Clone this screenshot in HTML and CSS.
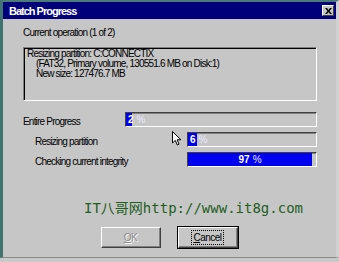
FILE: index.html
```html
<!DOCTYPE html>
<html lang="en">
<head>
  <meta charset="UTF-8">
  <title>Batch Progress</title>
  <link rel="stylesheet" href="styles.css">
</head>
<body>
  <div class="window">
    <div class="titlebar">
      <span class="title">Batch Progress</span>
      <span class="close">
        <svg width="7" height="6" viewBox="0 0 7 6"><path d="M0 0h2l1.5 2 1.5-2h2L4.5 3 7 6H5L3.5 4 2 6H0l2.5-3z" fill="#000"/></svg>
      </span>
    </div>
    <div class="content">
      <div class="caption">Current operation (1 of 2)</div>
      <div class="opbox">
        <div>Resizing partition: C:CONNECTIX</div>
        <div class="indent">(FAT32, Primary volume, 130551.6 MB on Disk:1)</div>
        <div class="indent">New size: 127476.7 MB</div>
      </div>

      <div class="progress">
        <div class="row">
          <span class="label">Entire Progress</span>
          <div class="bar wide"><div class="fill" style="width: 3%">2 <i>%</i></div></div>
        </div>
        <div class="row sub">
          <span class="label">Resizing partition</span>
          <div class="bar"><div class="fill" style="width: 7%">6 <i>%</i></div></div>
        </div>
        <div class="row sub">
          <span class="label">Checking current integrity</span>
          <div class="bar"><div class="fill center" style="width: 97%">97 <i>%</i></div></div>
        </div>
        <svg class="cursor" width="10" height="15" viewBox="0 0 10 15">
          <path d="M0.5 0.5v11.5l2.8-2.6 2 4.6 1.8-0.8-2-4.4h3.8z" fill="#fff" stroke="#000" stroke-width="1"/>
        </svg>
      </div>

      <div class="watermark">IT八哥网http://www.it8g.com</div>

      <div class="buttons">
        <button class="btn" disabled><u>O</u>K</button>
        <button class="btn default"><span class="focus"><u>C</u>ancel</span></button>
      </div>
    </div>
  </div>
</body>
</html>
```

FILE: styles.css
```css
* {
  box-sizing: border-box;
}

body {
  margin: 0;
  background: #c8c8c8;
  font-family: 'Liberation Sans', Arial, sans-serif;
  font-size: 10px;
  letter-spacing: -0.8px;
  color: #000;
}

.window {
  width: 339px;
  height: 258px;
  background: #c6c6c6;
  border-left: 3px solid #3f7470;
  border-top: 2px solid #4c7c78;
  border-right: 3px solid #d0d0d0;
  border-bottom: 1px solid #8a8a8a;
  display: flex;
  flex-direction: column;
}

.titlebar {
  height: 17px;
  background: #00007b;
  display: flex;
  align-items: center;
  justify-content: space-between;
  padding: 0 2px 0 6px;
}

.title {
  color: #fff;
  font-weight: bold;
  font-size: 11px;
  letter-spacing: -1px;
}

.close {
  width: 12px;
  height: 11px;
  background: #c6c6c6;
  border: 1px solid;
  border-color: #fff #404040 #404040 #fff;
  display: flex;
  align-items: center;
  justify-content: center;
}

.content {
  flex: 1;
  padding: 8px 19px 0 20px;
}

.caption {
  line-height: 12px;
  margin-bottom: 8px;
}

.opbox {
  height: 54px;
  border: 1px solid;
  border-color: #808080 #fff #fff #808080;
  box-shadow: inset 1px 1px 0 #000;
  padding: 1px 0 0 3px;
  line-height: 10px;
}

.opbox .indent {
  padding-left: 9px;
}

.progress {
  position: relative;
  margin-top: 11px;
  display: flex;
  flex-direction: column;
  gap: 5px;
}

.row {
  display: flex;
  align-items: center;
  height: 15px;
}

.row.sub {
  padding-left: 12px;
}

.label {
  flex: 1;
  padding-top: 3px;
}

.bar {
  width: 130px;
  height: 15px;
  border: 1px solid;
  border-color: #404040 #fff #fff #404040;
  box-shadow: inset 1px 1px 0 #808080;
  background: #c6c6c6;
  display: flex;
}

.bar.wide {
  width: 192px;
}

.fill {
  height: 100%;
  background: #0000f0;
  color: #fff;
  font-weight: bold;
  white-space: nowrap;
  display: flex;
  align-items: center;
  padding-left: 2px;
  letter-spacing: 0;
}

.fill.center {
  justify-content: center;
  padding-left: 0;
}

.fill i {
  font-style: normal;
  font-weight: normal;
  margin-left: 3px;
  color: #e8e8ff;
}

.cursor {
  position: absolute;
  left: 149px;
  top: 19px;
}

.watermark {
  margin-top: 33px;
  padding-left: 61px;
  font-family: 'DejaVu Sans Mono', 'Noto Sans CJK SC', monospace;
  font-size: 14px;
  line-height: 16px;
  letter-spacing: 0;
  color: #1f5e1f;
}

.buttons {
  display: flex;
  justify-content: center;
  gap: 17px;
  margin-top: 11px;
  padding-right: 2px;
}

.btn {
  width: 60px;
  height: 21px;
  font: inherit;
  letter-spacing: -0.5px;
  background: #c6c6c6;
  border: 1px solid;
  border-color: #fff #404040 #404040 #fff;
  box-shadow: inset -1px -1px 0 #808080;
  padding: 0;
  color: #000;
}

.btn:disabled {
  color: #8a8a8a;
  text-shadow: 1px 1px 0 #fff;
}

.btn.default {
  outline: 1px solid #000;
}

.focus {
  border: 1px dotted #000;
  padding: 1px 1px;
}
```
